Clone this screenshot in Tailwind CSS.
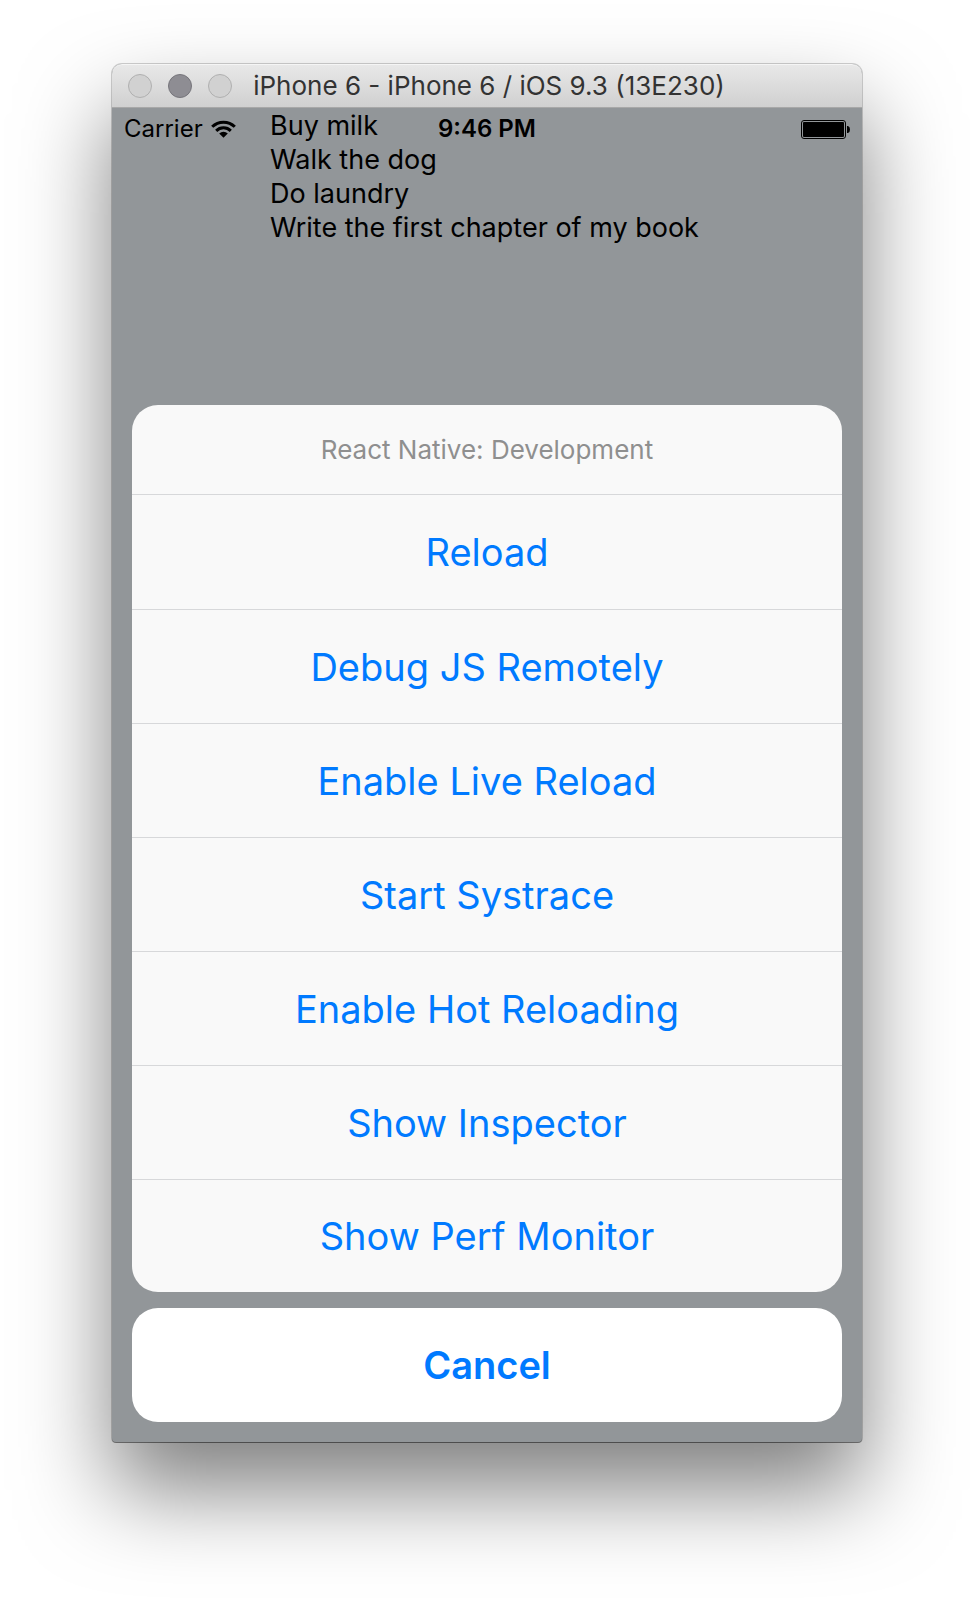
<!DOCTYPE html>
<html lang="en">
<head>
<meta charset="utf-8">
<meta name="viewport" content="width=device-width, initial-scale=1">
<title>iPhone 6 - iPhone 6 / iOS 9.3 (13E230)</title>
<script src="https://cdn.jsdelivr.net/npm/@tailwindcss/browser@4"></script>
</head>
<body class="min-h-screen overflow-x-hidden bg-white px-28 pt-16 pb-40 font-['Inter','Liberation_Sans',sans-serif]">
<main class="flex min-h-[1378px] flex-col rounded-t-[10px] rounded-b-[4px] bg-[#929699] shadow-[0_0_0_1px_rgba(0,0,0,0.18),0_1px_0_0_rgba(0,0,0,0.35),0_48px_90px_0_rgba(0,0,0,0.5)]">

  <!-- Simulator title bar -->
  <header class="relative flex h-11 shrink-0 items-center justify-center rounded-t-[10px] border-t border-b border-t-[#f5f5f5] border-b-[#a8a8a8] bg-linear-to-b from-[#e8e8e8] to-[#d0d0d0] pl-1">
    <div class="absolute left-4 flex gap-4">
      <button type="button" aria-label="Close" class="size-6 rounded-full border border-[#b0b0b0] bg-[#d1d1d1]"></button>
      <button type="button" aria-label="Minimize" class="size-6 rounded-full border border-[#76757b] bg-[#8e8d93]"></button>
      <button type="button" aria-label="Zoom" class="size-6 rounded-full border border-[#b0b0b0] bg-[#d1d1d1]"></button>
    </div>
    <h1 class="text-[26px] leading-8 whitespace-nowrap text-[#333]">iPhone 6 - iPhone 6 / iOS 9.3 (13E230)</h1>
  </header>

  <div class="relative flex grow flex-col justify-between gap-8">
    <!-- Status bar, drawn over the app -->
    <div class="absolute inset-x-0 top-0 grid h-10 grid-cols-3 items-center pt-0.5 pr-3 pl-3 text-black">
      <div class="flex items-center gap-2">
        <span class="text-[24px] leading-8">Carrier</span>
        <svg class="h-[18px] w-[25px]" viewBox="0 0 25 18" fill="none" stroke="#000" stroke-width="3" aria-label="Wi-Fi">
          <path d="M1.2 6.8a16 16 0 0 1 22.6 0"/>
          <path d="M5.2 10.9a10.3 10.3 0 0 1 14.6 0"/>
          <path d="M12.5 17.8 8.2 13.4a6.1 6.1 0 0 1 8.6 0z" fill="#000" stroke="none"/>
        </svg>
      </div>
      <span class="text-center text-[24px] leading-8 font-semibold whitespace-nowrap">9:46 PM</span>
      <svg class="h-[19px] w-[49px] justify-self-end" viewBox="0 0 49 19" aria-label="Battery full">
        <rect x=".5" y=".5" width="44" height="18" rx="2.5" fill="none" stroke="#000"/>
        <rect x="2" y="2" width="41" height="15" rx="1" fill="#000"/>
        <path d="M46 6h1q2 .8 2 3.500t-2 3.500h-1z" fill="#000"/>
      </svg>
    </div>

    <ul class="pt-px pl-[158px] text-[27px] leading-[34px] text-black">
      <li>Buy milk</li>
      <li>Walk the dog</li>
      <li>Do laundry</li>
      <li>Write the first chapter of my book</li>
    </ul>

    <!-- Action sheet -->
    <section class="flex flex-col gap-4 px-5 pb-5 text-[38px] leading-[48px] text-[#007aff]" aria-labelledby="sheet-title">
      <div class="flex flex-col divide-y divide-[#d7d8da] overflow-hidden rounded-[26px] bg-[#f9f9f9]">
        <h2 id="sheet-title" class="flex h-[90px] items-center justify-center text-[26px] leading-8 text-[#8f8f8f]">React Native: Development</h2>
        <button type="button" class="h-[115px]">Reload</button>
        <button type="button" class="h-[114px]">Debug JS Remotely</button>
        <button type="button" class="h-[114px]">Enable Live Reload</button>
        <button type="button" class="h-[114px]">Start Systrace</button>
        <button type="button" class="h-[114px]">Enable Hot Reloading</button>
        <button type="button" class="h-[114px]">Show Inspector</button>
        <button type="button" class="h-[112px]">Show Perf Monitor</button>
      </div>
      <button type="button" class="h-[114px] rounded-[26px] bg-white font-semibold">Cancel</button>
    </section>
  </div>
</main>
</body>
</html>
